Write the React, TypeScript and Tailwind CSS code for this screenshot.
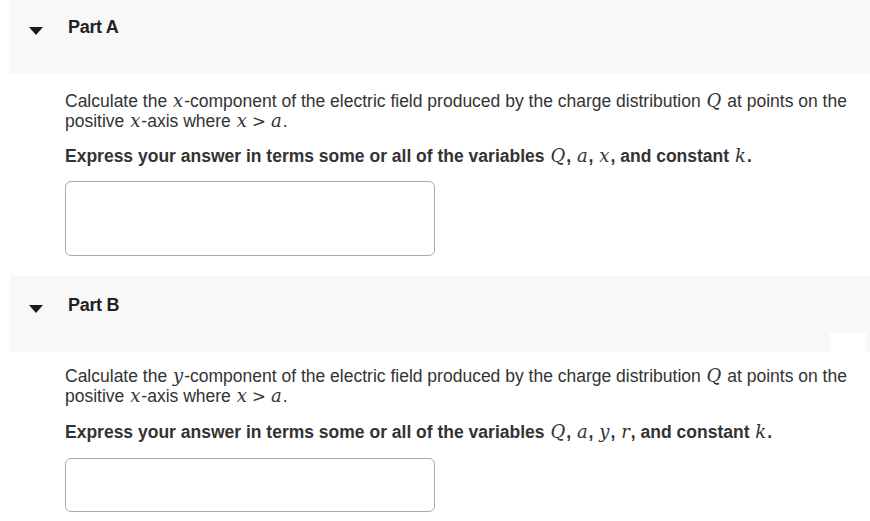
const v = "font-['DejaVu_Serif',serif] italic font-normal text-[18px] leading-none mx-[1px]";

function Caret() {
  return (
    <svg width="14" height="8" viewBox="0 0 14 8" className="mt-[9px] shrink-0">
      <path d="M0 0 H14 L7 8 Z" fill="#1a1a1a" />
    </svg>
  );
}

function Header({ label, first, patch }: { label: string; first?: boolean; patch?: boolean }) {
  return (
    <div className={`relative ml-[10px] flex items-start bg-[#f8f8f8] pl-[19px] ${first ? "h-[74px] pt-[18px]" : "h-[76px] pt-[20px]"}`}>
      <Caret />
      <span className="ml-[25px] text-[18px] leading-[18px] font-bold text-[#222] tracking-[-0.3px]">{label}</span>
      {patch && <div className="absolute right-[4px] bottom-0 h-[19px] w-[36px] bg-white" />}
    </div>
  );
}

function Var({ children }: { children: string }) {
  return <span className={v}>{children}</span>;
}

function Gt() {
  return <span className="font-['DejaVu_Serif',serif] font-normal text-[17px] leading-none mx-[4px]">&gt;</span>;
}

const line = "h-[20px] leading-[20px] whitespace-nowrap";

export default function App() {
  return (
    <div className="w-[870px] h-[521px] bg-white overflow-hidden font-['Liberation_Sans',Arial,sans-serif] text-[#333] text-[17.5px]">
      <Header label="Part A" first />
      <div className="pl-[65px] pt-[17px] pb-[20px]">
        <div className={line}>
          Calculate the <Var>x</Var>-component of the electric field produced by the charge distribution <Var>Q</Var> at points on the
        </div>
        <div className={line}>
          positive <Var>x</Var>-axis where <Var>x</Var><Gt /><Var>a</Var>.
        </div>
        <div className={`mt-[15px] font-bold ${line}`}>
          Express your answer in terms some or all of the variables <Var>Q</Var>, <Var>a</Var>, <Var>x</Var>, and constant <Var>k</Var>.
        </div>
        <div className="mt-[15px] h-[75px] w-[370px] rounded-[6px] border border-[#aaa]" />
      </div>
      <Header label="Part B" patch />
      <div className="pl-[65px] pt-[14px]">
        <div className={line}>
          Calculate the <Var>y</Var>-component of the electric field produced by the charge distribution <Var>Q</Var> at points on the
        </div>
        <div className={line}>
          positive <Var>x</Var>-axis where <Var>x</Var><Gt /><Var>a</Var>.
        </div>
        <div className={`mt-[16px] font-bold ${line}`}>
          Express your answer in terms some or all of the variables <Var>Q</Var>, <Var>a</Var>, <Var>y</Var>, <Var>r</Var>, and constant <Var>k</Var>.
        </div>
        <div className="mt-[16px] h-[54px] w-[370px] rounded-[6px] border border-[#aaa]" />
      </div>
    </div>
  );
}
